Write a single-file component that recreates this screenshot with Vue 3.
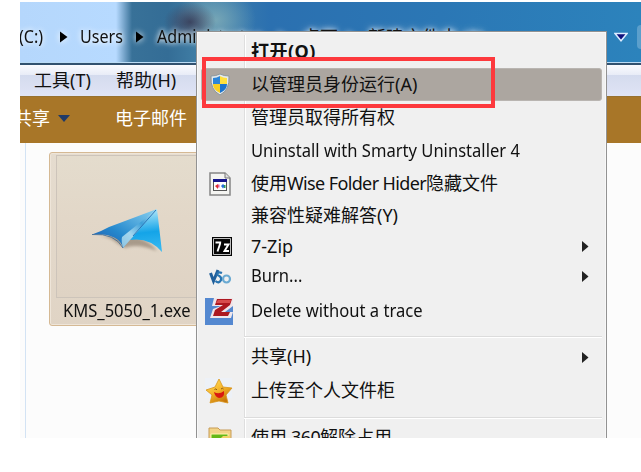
<script setup>
const crumbs = [
  { text: '(C:)', cls: 'drive' },
  { text: 'Users', cls: 'users' },
  { text: 'Administrator', cls: 'admin' },
  { text: '桌面', cls: 'desktop' },
  { text: '新建文件夹 (2)', cls: 'folder' },
]

const items = [
  { text: '打开(O)', cls: 'bold', height: 33 },
  { text: '以管理员身份运行(A)', icon: 'shield', cls: 'active', height: 33 },
  { text: '管理员取得所有权', height: 33 },
  { text: 'Uninstall with Smarty Uninstaller 4', cls: 'narrow', height: 33 },
  { text: '使用Wise Folder Hider隐藏文件', icon: 'wise', height: 33 },
  { text: '兼容性疑难解答(Y)', height: 32 },
  { text: '7-Zip', icon: 'zip', sub: true, height: 29 },
  { text: 'Burn...', icon: 'vso', cls: 'narrow', sub: true, height: 30 },
  { text: 'Delete without a trace', icon: 'trace', cls: 'narrow', height: 40 },
  { separator: true, height: 11 },
  { text: '共享(H)', sub: true, height: 30 },
  { text: '上传至个人文件柜', icon: 'star', height: 38 },
  { separator: true, height: 14 },
  { text: '使用 360解除占用', icon: 'folder360', height: 28 },
]

// Long latin runs inside chinese labels are set a little tighter
const runs = (text) => text.split(/([A-Z][A-Za-z ]{4,}| \d{3})/).filter(Boolean)
const isLatin = (run) => /^([A-Z][A-Za-z ]{4,}| \d{3})$/.test(run)
</script>

<template>
  <div class="screen">
    <div class="window">
      <!-- Address bar -->
      <div class="address">
        <template v-for="(crumb, i) in crumbs" :key="crumb.text">
          <svg v-if="i > 0" class="crumb-arrow" width="8" height="12" viewBox="0 0 8 12">
            <path d="M0 0.5L7.5 6L0 11.5z" />
          </svg>
          <span class="crumb" :class="crumb.cls">{{ crumb.text }}</span>
        </template>
        <svg class="address-drop" width="14" height="10" viewBox="0 0 14 10">
          <path d="M1 1.5h12L7 8.8z" fill="#10107c" stroke="#dcecff" stroke-width="1.5" />
        </svg>
        <div class="address-end"></div>
      </div>

      <!-- Menu bar -->
      <div class="menubar">
        <span class="tools">工具(T)</span>
        <span>帮助(H)</span>
      </div>

      <!-- Command bar -->
      <div class="toolbar">
        <span class="share">共享</span>
        <svg width="12" height="7" viewBox="0 0 12 7"><path d="M0 0h12L6 7z" fill="#1f3a68" /></svg>
        <span class="mail">电子邮件</span>
      </div>

      <!-- File list -->
      <div class="content">
        <div class="file">
          <div class="thumb">
            <svg width="76" height="50" viewBox="0 0 76 50">
              <defs>
                <linearGradient id="wing" x1="0" y1="1" x2="1" y2="0">
                  <stop offset="0" stop-color="#2454a8" />
                  <stop offset="0.4" stop-color="#2488cd" />
                  <stop offset="1" stop-color="#8bd2f1" />
                </linearGradient>
                <linearGradient id="tail" x1="0.5" y1="0" x2="0.6" y2="1">
                  <stop offset="0" stop-color="#b9eafa" />
                  <stop offset="0.55" stop-color="#14a4e8" />
                  <stop offset="1" stop-color="#39baf1" />
                </linearGradient>
                <linearGradient id="fold" x1="0" y1="1" x2="1" y2="0">
                  <stop offset="0" stop-color="#8cc4e2" />
                  <stop offset="0.3" stop-color="#a5d6ee" />
                  <stop offset="0.6" stop-color="#3c9fd8" />
                  <stop offset="1" stop-color="#d0f2fc" />
                </linearGradient>
                <filter id="soft"><feGaussianBlur stdDeviation="1.4" /></filter>
              </defs>
              <path d="M10 30Q22 31 28 37L36 42Q48 37 68 45Q58 31 38 30z" fill="#8b7b6a" opacity="0.65" filter="url(#soft)" />
              <path d="M3 28.5Q13 25 20 21L68 3L40 34L34 42Q30 27 3 28.5z" fill="url(#wing)" />
              <path d="M68 3L73 46Q60 31 41 34L34 42z" fill="url(#tail)" />
              <path d="M68 3L33 31Q32 35 34 42L41 34z" fill="url(#fold)" />
              <path d="M67 4L44 30" stroke="#2878ba" stroke-width="1" fill="none" />
              <path d="M3 28.5Q26 27 34 42" stroke="#336493" stroke-width="0.8" fill="none" />
            </svg>
          </div>
          <div class="filename">KMS_5050_1.exe</div>
        </div>
      </div>

      <!-- Context menu -->
      <div class="menu">
        <div
          v-for="(item, i) in items"
          :key="i"
          class="item"
          :class="[item.cls, { separator: item.separator }]"
          :style="{ height: item.height + 'px' }"
        >
          <template v-if="!item.separator">
            <div class="icon" :class="item.icon">
              <svg v-if="item.icon === 'shield'" width="20" height="23" viewBox="0 0 20 23">
                <path d="M10 1Q14 3 19 3Q20 17 10 22Q0 17 1 3Q6 3 10 1z" fill="#e4e9eb" stroke="#8c979d" />
                <path d="M10 3Q7 5 3 5V11H10z" fill="#2d86d8" />
                <path d="M10 3Q13 5 17 5V11H10z" fill="#ffe03c" />
                <path d="M3 11H10V20Q3 17 3 11z" fill="#f9cf20" />
                <path d="M10 11H17Q17 17 10 20z" fill="#1c74cd" />
              </svg>
              <svg v-else-if="item.icon === 'wise'" width="22" height="24" viewBox="0 0 22 24">
                <path d="M1 1H16L21 6V23H1z" fill="#f5f5f2" stroke="#858585" stroke-width="1.5" />
                <path d="M16 1V6H21" fill="#ddd" stroke="#777" />
                <rect x="4.5" y="7.5" width="13" height="11" fill="#fff" stroke="#555" />
                <path d="M4 7h14v3H4z" fill="#16168c" />
                <path d="M6 14l3-2v5z" fill="#e03030" />
                <path d="M9 12.5h1.5v3H9z" fill="#e05aa0" />
                <path d="M12 14l2-2 2 2-2 2.5z" fill="#276fd8" />
                <path d="M15 13h1.5v3H15z" fill="#28a05c" />
              </svg>
              <svg v-else-if="item.icon === 'zip'" width="20" height="19" viewBox="0 0 20 19">
                <path d="M0 0h20v19H0z" fill="#050505" />
                <path d="M1.5 1.5h17v16h-17z" fill="none" stroke="#eee" stroke-width="0.8" />
                <path d="M3.5 5.5H8.5L5.5 14.5M12 7.5H16.5L12.5 14H17" fill="none" stroke="#fff" stroke-width="1.9" />
                <path d="M10 2v15" stroke="#050505" stroke-width="1.5" />
              </svg>
              <svg v-else-if="item.icon === 'vso'" width="23" height="17" viewBox="0 0 23 17">
                <path d="M1.5 5L4.5 13L9 2" fill="none" stroke="#205f9b" stroke-width="3" />
                <path d="M13 5Q8 3 8.5 7Q13 9 12 12Q10 16 6.5 13" fill="none" stroke="#2874b1" stroke-width="2.3" />
                <circle cx="17.5" cy="11" r="3.5" fill="none" stroke="#6aaad2" stroke-width="2.2" />
              </svg>
              <svg v-else-if="item.icon === 'trace'" width="28" height="27" viewBox="0 0 28 27">
                <path d="M0 0h28v27H0z" fill="#5488d0" />
                <path d="M9 0H28V8L20 14H28L26 20H5L8 11L16 8H7z" fill="#f0e6ea" />
                <path d="M12 1H27L25 7L16 14H25L23 18H8L10 12L18 7H10z" fill="#ad1820" />
                <path d="M13 2H26L25 5H11z" fill="#d84c4d" />
              </svg>
              <svg v-else-if="item.icon === 'star'" width="28" height="28" viewBox="0 0 28 28">
                <defs>
                  <linearGradient id="gold" x1="0" y1="0" x2="0.6" y2="1">
                    <stop offset="0" stop-color="#ffe86d" />
                    <stop offset="0.55" stop-color="#f6b52a" />
                    <stop offset="1" stop-color="#c77708" />
                  </linearGradient>
                </defs>
                <path d="M0 1h27v20H0z" fill="#edf1f7" />
                <path d="M14 2L18 10L27 11L21 18L23 26L14 24L5 26L7 18L1 13L10 10z" fill="url(#gold)" stroke="#d99419" stroke-width="0.8" />
                <path d="M9 15Q14 18 19 14Q20 21 14 21Q10 20 9 15z" fill="#d91911" />
                <path d="M9.5 12.5q1.5-1.5 2.5 0.5M16 12q1.5-1.5 2.5 0" fill="none" stroke="#714514" stroke-width="0.8" />
              </svg>
              <svg v-else-if="item.icon === 'folder360'" width="24" height="24" viewBox="0 0 24 24">
                <path d="M1 2H10L12 4H23V23H1z" fill="#f3d487" stroke="#c79b57" />
                <path d="M3 8H20V20H3z" fill="#65b818" stroke="#fff3ac" />
                <path d="M12 13l3-3h5l2-1v14H12z" fill="#f1d369" />
              </svg>
            </div>
            <span class="label"><span v-for="run in runs(item.text)" :key="run" :class="{ latin: item.cls !== 'narrow' && isLatin(run) }">{{ run }}</span></span>
            <svg v-if="item.sub" class="sub-arrow" width="7" height="11" viewBox="0 0 7 11">
              <path d="M0 0L6.5 5.5L0 11z" fill="#222" />
            </svg>
          </template>
        </div>
      </div>
      <div class="marker"></div>
    </div>
  </div>
</template>

<style>
body {
  background: #fff;
}
</style>

<style scoped>
.screen {
  width: 641px;
  height: 472px;
  box-sizing: border-box;
  padding: 2px 0 34px 20px;
  overflow: hidden;
  background: #fff;
  color: #111;
  font-family: "Noto Sans", "Noto Sans CJK SC", sans-serif;
  font-size: 18px;
  line-height: 24px;
  white-space: nowrap;
}

.window {
  position: relative;
  width: 621px;
  height: 436px;
  overflow: hidden;
  background: #fcfcfc;
}

.address {
  display: flex;
  align-items: center;
  height: 61px;
  box-sizing: border-box;
  padding-top: 9px;
  border-bottom: 1px solid #bbdcf5;
  background:
    radial-gradient(ellipse 26px 20px at 170px 20px, rgba(50, 40, 66, 0.7), rgba(66, 55, 79, 0.4) 50%, transparent),
    radial-gradient(ellipse 40px 34px at 196px 18px, rgba(131, 175, 185, 0.8), transparent),
    linear-gradient(90deg, #b5d7fc 0, #b7daff 96px, #387198 112px, #346d96 148px, #4382a9 185px, #2b70b0 250px, #2b77b5 420px, #2c83bc 621px);
  text-shadow: 0 0 5px #fff, 0 0 8px rgba(255, 255, 255, 0.7);
}

.crumb {
  flex: none;
}

.drive,
.users,
.admin {
  padding-bottom: 2px;
  font-size: 17.5px;
  transform: scaleX(0.92);
  transform-origin: left;
}

.drive {
  width: 39px;
  margin-left: -1px;
}

.users {
  width: 43px;
}

.admin {
  width: 119px;
  margin-left: 13px;
}

.desktop {
  width: 38px;
  margin-left: 16px;
}

.folder {
  margin-left: 13px;
}

.crumb-arrow {
  flex: none;
  margin-left: 2px;
  overflow: visible;
  filter: drop-shadow(0 0 3px #fff);
}

.crumb-arrow + .users {
  margin-left: 12px;
}

.users + .crumb-arrow {
  margin-left: 13px;
}

.crumb-arrow:has(+ .folder) {
  margin-left: 7px;
}

.address-drop {
  flex: none;
  margin-left: auto;
  margin-right: 9px;
}

.address-end {
  width: 4px;
  height: 24px;
  border-radius: 10px 0 0 10px;
  background: #5b9fcc;
}

.menubar {
  display: flex;
  align-items: center;
  height: 33px;
  box-sizing: border-box;
  padding-bottom: 1px;
  border-top: 2px solid #31516f;
  background: linear-gradient(#fafbfe, #e8ecf7 32%, #d4dbee 33%, #e0e4f5);
}

.tools {
  width: 82px;
  margin-left: 14px;
}

.toolbar {
  display: flex;
  align-items: center;
  height: 47px;
  box-sizing: border-box;
  padding-bottom: 4px;
  border-top: 1px solid #97712f;
  background: #a87628;
  color: #fff;
}

.share {
  margin-left: -6px;
  margin-right: 8px;
}

.mail {
  margin-left: 45px;
}

.content {
  height: 295px;
  box-sizing: border-box;
  margin-left: 5px;
  padding: 9px 0 0 23px;
  border-left: 1px solid #d3e3f4;
}

.file {
  width: 166px;
  height: 174px;
  box-sizing: border-box;
  padding: 2px 0 0 6px;
  border: 1px solid #d5b994;
  border-radius: 3px;
  background: linear-gradient(#e5dccf, #e0d4c5);
  box-shadow: inset 0 0 0 1px #eee5d9;
}

.thumb {
  height: 143px;
  box-sizing: border-box;
  padding: 50px 0 0 32px;
  border: 1px solid #cdc4ba;
  background: linear-gradient(#e4dccd, #e2d7c8 45%, #dfd3c4);
}

.filename {
  margin-left: 7px;
  font-size: 17.5px;
  transform: scaleX(0.945);
  transform-origin: left;
}

/* Context menu */
.menu {
  position: absolute;
  left: 176px;
  top: 29px;
  width: 411px;
  height: 430px;
  box-sizing: border-box;
  padding: 3px 4px;
  border: 1px solid #929292;
  background: linear-gradient(90deg, transparent 47px, #dedede 47px, #dedede 48px, #fff 48px, #fff 49px, transparent 49px) 0 3px no-repeat, #f0f0f0;
  box-shadow: inset 0 0 0 1px #f8f8f8;
}

.item {
  display: flex;
  align-items: center;
  box-sizing: border-box;
  padding-right: 13px;
}

.icon {
  display: flex;
  flex: none;
  justify-content: center;
  width: 35px;
  margin-right: 15px;
}

.icon.zip {
  width: 41px;
  margin-right: 9px;
}

.icon.vso {
  width: 38px;
  margin-right: 12px;
}

.icon.wise,
.icon.folder360 {
  width: 37px;
  margin-right: 13px;
}

.icon.shield {
  width: 35px;
  margin-right: 14px;
}

.label {
  flex: 1;
  padding-bottom: 2px;
}

.latin {
  letter-spacing: -0.63px;
}

.narrow .label {
  font-size: 17.5px;
  transform: scaleX(0.947);
  transform-origin: left;
}

.active {
  border: 1px solid #b9b5b1;
  border-radius: 3px;
  background: #aca6a0;
}

.bold {
  font-weight: 700;
  letter-spacing: 0.5px;
}

.separator::before {
  content: "";
  width: 100%;
  height: 1px;
  margin-left: 43px;
  margin-right: -13px;
  background: #dcdcdc;
  box-shadow: 0 1px #fff;
}

.marker {
  position: absolute;
  left: 182px;
  top: 55px;
  width: 293px;
  height: 51px;
  box-sizing: border-box;
  border: 4px solid #fd393d;
}
</style>
